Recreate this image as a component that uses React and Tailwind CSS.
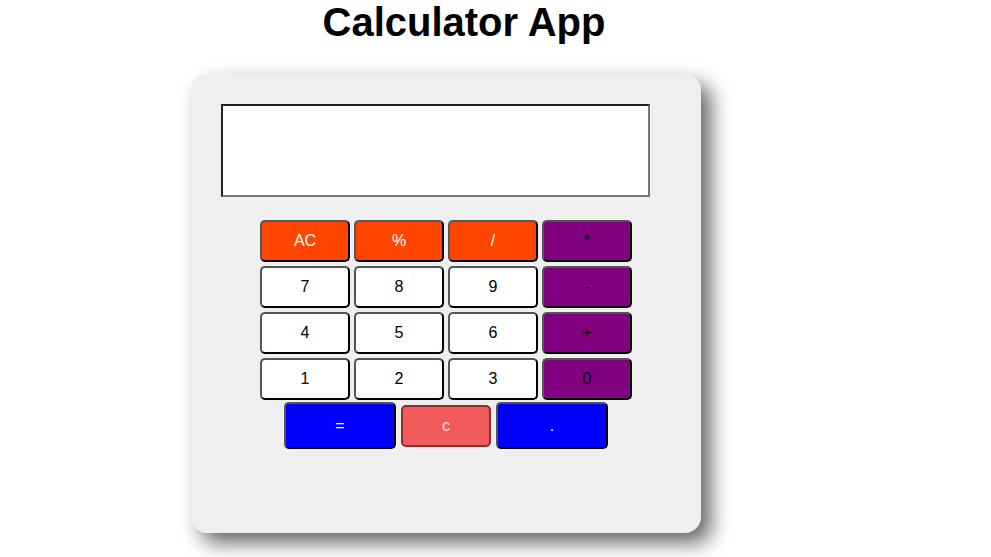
import React, { useState } from 'react';

const keys = [
    { label: 'AC', kind: 'fn' },
    { label: '%', kind: 'fn' },
    { label: '/', kind: 'fn' },
    { label: '*', kind: 'op' },
    { label: '7', kind: 'num' },
    { label: '8', kind: 'num' },
    { label: '9', kind: 'num' },
    { label: '-', kind: 'op' },
    { label: '4', kind: 'num' },
    { label: '5', kind: 'num' },
    { label: '6', kind: 'num' },
    { label: '+', kind: 'op' },
    { label: '1', kind: 'num' },
    { label: '2', kind: 'num' },
    { label: '3', kind: 'num' },
    { label: '0', kind: 'op' },
];

const kindClass = {
    fn: 'bg-[#ff4500] text-white',
    op: 'bg-[#800080] text-black',
    num: 'bg-white text-black',
};

const outset = 'border-2 border-t-[#555] border-l-[#555] border-b-black border-r-black rounded-[5px]';

const App = () => {
    const [value, setValue] = useState('');

    const press = (label) => {
        if (label === 'AC') return setValue('');
        if (label === 'c') return setValue(v => v.slice(0, -1));
        if (label === '=') {
            try {
                // eslint-disable-next-line no-new-func
                setValue(String(Function(`return (${value})`)()));
            } catch (e) {
                setValue('Error');
            }
            return;
        }
        setValue(v => v + label);
    };

    return (
        <div className="min-h-[557px] w-full bg-white font-['Liberation_Sans',Arial,sans-serif]">
            <h1 className="pt-[2px] pr-[63px] text-center text-[40px] font-bold leading-[40px] text-black">Calculator App</h1>

            <div className="ml-[191px] mt-[32px] h-[459px] w-[510px] rounded-[16px] bg-[#efefef] px-[30px] pt-[30px] shadow-[10px_10px_20px_rgba(0,0,0,0.6)]">
                {/* Display */}
                <input
                    value={value}
                    readOnly
                    className="block h-[93px] w-[429px] border-2 border-t-[#222] border-l-[#222] border-b-[#777] border-r-[#777] bg-white px-2 text-right text-[28px] text-black outline-none"
                />

                {/* Keypad */}
                <div className="mt-[23px] flex flex-col items-center">
                    <div className="grid grid-cols-[repeat(4,90px)] gap-x-[4px] gap-y-[4px]">
                        {keys.map(k => (
                            <button
                                key={k.label}
                                onClick={() => press(k.label)}
                                className={`h-[42px] text-[16px] ${outset} ${kindClass[k.kind]}`}
                            >
                                {k.label}
                            </button>
                        ))}
                    </div>

                    <div className="mt-[2px] flex items-center gap-x-[5px]">
                        <button onClick={() => press('=')} className={`h-[47px] w-[112px] bg-[#0000ff] text-[16px] text-white ${outset}`}>=</button>
                        <button onClick={() => press('c')} className="h-[42px] w-[90px] rounded-[5px] border-2 border-[#8a2d2d] bg-[#f25b5b] text-[16px] text-[#ffe0e0]">c</button>
                        <button onClick={() => press('.')} className={`h-[47px] w-[112px] bg-[#0000ff] text-[16px] text-white ${outset}`}>.</button>
                    </div>
                </div>
            </div>
        </div>
    );
};

export default App;
